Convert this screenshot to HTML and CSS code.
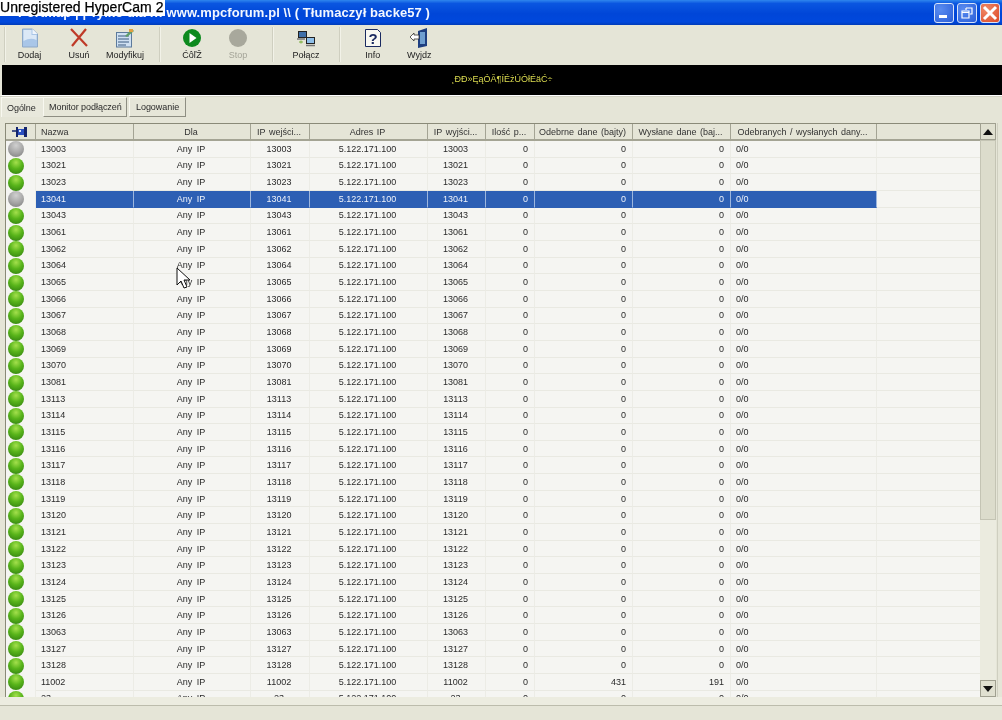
FILE: index.html
```html
<!DOCTYPE html>
<html lang="pl">
<head>
<meta charset="utf-8">
<title>Portmap</title>
<link rel="stylesheet" href="styles.css">
</head>
<body>
<div class="app">
  <div class="stamp">Unregistered HyperCam 2</div>
  <header class="titlebar">
    <span class="title">Portmap | | Tylko dla ::: www.mpcforum.pl \\ ( Tłumaczył backe57 )</span>
    <span class="winbtns">
      <span class="wb"><svg width="18" height="18" viewBox="0 0 18 18"><rect x="4" y="11" width="8" height="3" fill="#fff"/></svg></span>
      <span class="wb"><svg width="18" height="18" viewBox="0 0 18 18"><path d="M8 4h6v6h-2M8 4v2M4 7h7v7H4zM4 8.500h7" fill="none" stroke="#fff" stroke-width="1.200"/></svg></span>
      <span class="wb wb-close"><svg width="18" height="18" viewBox="0 0 18 18"><path d="M3 3l12 12M15 3L3 15" stroke="#fff" stroke-width="3"/></svg></span>
    </span>
  </header>
  <nav class="toolbar">
    <div class="tgroup g1">
      <div class="tool w1"><svg width="20" height="20" viewBox="0 0 20 20"><path d="M2.500 1h10l5 5v13h-15z" fill="#a9c6e8" stroke="#8ea9c8"/><path d="M12.500 1v5h5z" fill="#f0f5fc"/><path d="M3.500 2h8v5h5v5q-6-3-13 1z" fill="#dbe8f6"/></svg><span>Dodaj</span></div>
      <div class="tool w2"><svg width="20" height="20" viewBox="0 0 20 20"><path d="M2 1l16 17M17 1L3 18" stroke="#bf3a28" stroke-width="2.200" fill="none"/></svg><span>Usuń</span></div>
      <div class="tool w3"><svg width="20" height="20" viewBox="0 0 20 20"><rect x="1.500" y="4.500" width="15" height="14.500" fill="#cfe0f2" stroke="#5c7a9c"/><path d="M3 8h11M3 11h11M3 14h11M3 17h8" stroke="#3a5a80"/><path d="M10 8l7-7 2 2-7 6z" fill="#5f9e6a"/><rect x="14" y="1" width="4" height="3" fill="#e0a040"/></svg><span>Modyfikuj</span></div>
    </div>
    <div class="tgroup g2">
      <div class="tool w4"><svg width="20" height="20" viewBox="0 0 20 20"><circle cx="10" cy="10" r="9" fill="#0d8a1e"/><path d="M7.500 5l7 5-7 5z" fill="#fff"/></svg><span>ĆôľŽ</span></div>
      <div class="tool w5 off"><svg width="20" height="20" viewBox="0 0 20 20"><circle cx="10" cy="10" r="9" fill="#a8a89c"/></svg><span>Stop</span></div>
    </div>
    <div class="tgroup g3">
      <div class="tool w6"><svg width="20" height="20" viewBox="0 0 20 20"><rect x="2.500" y="3.500" width="8" height="6" fill="#3f6fa8" stroke="#222"/><rect x="10.500" y="9.500" width="8" height="6" fill="#8fbfe8" stroke="#222"/><path d="M1 11h8M10 17.500h9" stroke="#777" stroke-width="1.500"/><path d="M3 14h4M5 12.500v3" stroke="#7aae3a"/></svg><span>Połącz</span></div>
    </div>
    <div class="tgroup g4">
      <div class="tool w7"><svg width="20" height="20" viewBox="0 0 20 20"><path d="M2.500 1.500h12l3 3v14h-15z" fill="#f8f8f2" stroke="#1a2a60"/><text x="10" y="15.500" class="qmark">?</text></svg><span>Info</span></div>
      <div class="tool w8"><svg width="20" height="20" viewBox="0 0 20 20"><path d="M9 3l9-3v18l-9 2z" fill="#1f3f80"/><rect x="11" y="4" width="5" height="12" fill="#6f9fd0"/><path d="M1 9l4-4v2h5v4H5v2z" fill="#fff" stroke="#333" stroke-width="0.800"/></svg><span>Wyjdz</span></div>
    </div>
  </nav>
  <div class="banner">¸ÐÐ»ĘąÓÃ¶ÍÉżÚÓłÉäĆ÷</div>
  <div class="tabs">
    <span class="tab active">Ogólne</span>
    <span class="tab">Monitor podłączeń</span>
    <span class="tab">Logowanie</span>
  </div>
  <main class="panel">
    <div class="grid-area">
      <div class="row head">
        <div class="c pin"><svg width="15" height="10" viewBox="0 0 15 10"><path d="M0 4h5" stroke="#14246c" stroke-width="1.500"/><rect x="4" y="0" width="2" height="10" fill="#14246c"/><rect x="6" y="2" width="6" height="6" fill="#2a4fc0"/><rect x="7" y="3" width="2" height="2" fill="#dfe6f8"/><rect x="12" y="0" width="3" height="10" fill="#14246c"/></svg></div>
        <div class="c l name">Nazwa</div><div class="c m">Dla</div><div class="c m">IP wejści...</div><div class="c m">Adres IP</div><div class="c m">IP wyjści...</div><div class="c m">Ilość p...</div><div class="c m">Odebrne dane (bajty)</div><div class="c m">Wysłane dane (baj...</div><div class="c m">Odebranych / wysłanych dany...</div><div class="c"></div>
      </div>
      <div class="rows">
        <div class="row"><div class="c ic"><i class="led off"></i></div><div class="c n">13003</div><div class="c m">Any IP</div><div class="c m">13003</div><div class="c m">5.122.171.100</div><div class="c m">13003</div><div class="c r">0</div><div class="c r">0</div><div class="c r">0</div><div class="c n">0/0</div><div class="c"></div></div>
        <div class="row"><div class="c ic"><i class="led"></i></div><div class="c n">13021</div><div class="c m">Any IP</div><div class="c m">13021</div><div class="c m">5.122.171.100</div><div class="c m">13021</div><div class="c r">0</div><div class="c r">0</div><div class="c r">0</div><div class="c n">0/0</div><div class="c"></div></div>
        <div class="row"><div class="c ic"><i class="led"></i></div><div class="c n">13023</div><div class="c m">Any IP</div><div class="c m">13023</div><div class="c m">5.122.171.100</div><div class="c m">13023</div><div class="c r">0</div><div class="c r">0</div><div class="c r">0</div><div class="c n">0/0</div><div class="c"></div></div>
        <div class="row sel"><div class="c ic"><i class="led off"></i></div><div class="c n">13041</div><div class="c m">Any IP</div><div class="c m">13041</div><div class="c m">5.122.171.100</div><div class="c m">13041</div><div class="c r">0</div><div class="c r">0</div><div class="c r">0</div><div class="c n">0/0</div><div class="c"></div></div>
        <div class="row"><div class="c ic"><i class="led"></i></div><div class="c n">13043</div><div class="c m">Any IP</div><div class="c m">13043</div><div class="c m">5.122.171.100</div><div class="c m">13043</div><div class="c r">0</div><div class="c r">0</div><div class="c r">0</div><div class="c n">0/0</div><div class="c"></div></div>
        <div class="row"><div class="c ic"><i class="led"></i></div><div class="c n">13061</div><div class="c m">Any IP</div><div class="c m">13061</div><div class="c m">5.122.171.100</div><div class="c m">13061</div><div class="c r">0</div><div class="c r">0</div><div class="c r">0</div><div class="c n">0/0</div><div class="c"></div></div>
        <div class="row"><div class="c ic"><i class="led"></i></div><div class="c n">13062</div><div class="c m">Any IP</div><div class="c m">13062</div><div class="c m">5.122.171.100</div><div class="c m">13062</div><div class="c r">0</div><div class="c r">0</div><div class="c r">0</div><div class="c n">0/0</div><div class="c"></div></div>
        <div class="row"><div class="c ic"><i class="led"></i></div><div class="c n">13064</div><div class="c m">Any IP</div><div class="c m">13064</div><div class="c m">5.122.171.100</div><div class="c m">13064</div><div class="c r">0</div><div class="c r">0</div><div class="c r">0</div><div class="c n">0/0</div><div class="c"></div></div>
        <div class="row"><div class="c ic"><i class="led"></i></div><div class="c n">13065</div><div class="c m">Any IP</div><div class="c m">13065</div><div class="c m">5.122.171.100</div><div class="c m">13065</div><div class="c r">0</div><div class="c r">0</div><div class="c r">0</div><div class="c n">0/0</div><div class="c"></div></div>
        <div class="row"><div class="c ic"><i class="led"></i></div><div class="c n">13066</div><div class="c m">Any IP</div><div class="c m">13066</div><div class="c m">5.122.171.100</div><div class="c m">13066</div><div class="c r">0</div><div class="c r">0</div><div class="c r">0</div><div class="c n">0/0</div><div class="c"></div></div>
        <div class="row"><div class="c ic"><i class="led"></i></div><div class="c n">13067</div><div class="c m">Any IP</div><div class="c m">13067</div><div class="c m">5.122.171.100</div><div class="c m">13067</div><div class="c r">0</div><div class="c r">0</div><div class="c r">0</div><div class="c n">0/0</div><div class="c"></div></div>
        <div class="row"><div class="c ic"><i class="led"></i></div><div class="c n">13068</div><div class="c m">Any IP</div><div class="c m">13068</div><div class="c m">5.122.171.100</div><div class="c m">13068</div><div class="c r">0</div><div class="c r">0</div><div class="c r">0</div><div class="c n">0/0</div><div class="c"></div></div>
        <div class="row"><div class="c ic"><i class="led"></i></div><div class="c n">13069</div><div class="c m">Any IP</div><div class="c m">13069</div><div class="c m">5.122.171.100</div><div class="c m">13069</div><div class="c r">0</div><div class="c r">0</div><div class="c r">0</div><div class="c n">0/0</div><div class="c"></div></div>
        <div class="row"><div class="c ic"><i class="led"></i></div><div class="c n">13070</div><div class="c m">Any IP</div><div class="c m">13070</div><div class="c m">5.122.171.100</div><div class="c m">13070</div><div class="c r">0</div><div class="c r">0</div><div class="c r">0</div><div class="c n">0/0</div><div class="c"></div></div>
        <div class="row"><div class="c ic"><i class="led"></i></div><div class="c n">13081</div><div class="c m">Any IP</div><div class="c m">13081</div><div class="c m">5.122.171.100</div><div class="c m">13081</div><div class="c r">0</div><div class="c r">0</div><div class="c r">0</div><div class="c n">0/0</div><div class="c"></div></div>
        <div class="row"><div class="c ic"><i class="led"></i></div><div class="c n">13113</div><div class="c m">Any IP</div><div class="c m">13113</div><div class="c m">5.122.171.100</div><div class="c m">13113</div><div class="c r">0</div><div class="c r">0</div><div class="c r">0</div><div class="c n">0/0</div><div class="c"></div></div>
        <div class="row"><div class="c ic"><i class="led"></i></div><div class="c n">13114</div><div class="c m">Any IP</div><div class="c m">13114</div><div class="c m">5.122.171.100</div><div class="c m">13114</div><div class="c r">0</div><div class="c r">0</div><div class="c r">0</div><div class="c n">0/0</div><div class="c"></div></div>
        <div class="row"><div class="c ic"><i class="led"></i></div><div class="c n">13115</div><div class="c m">Any IP</div><div class="c m">13115</div><div class="c m">5.122.171.100</div><div class="c m">13115</div><div class="c r">0</div><div class="c r">0</div><div class="c r">0</div><div class="c n">0/0</div><div class="c"></div></div>
        <div class="row"><div class="c ic"><i class="led"></i></div><div class="c n">13116</div><div class="c m">Any IP</div><div class="c m">13116</div><div class="c m">5.122.171.100</div><div class="c m">13116</div><div class="c r">0</div><div class="c r">0</div><div class="c r">0</div><div class="c n">0/0</div><div class="c"></div></div>
        <div class="row"><div class="c ic"><i class="led"></i></div><div class="c n">13117</div><div class="c m">Any IP</div><div class="c m">13117</div><div class="c m">5.122.171.100</div><div class="c m">13117</div><div class="c r">0</div><div class="c r">0</div><div class="c r">0</div><div class="c n">0/0</div><div class="c"></div></div>
        <div class="row"><div class="c ic"><i class="led"></i></div><div class="c n">13118</div><div class="c m">Any IP</div><div class="c m">13118</div><div class="c m">5.122.171.100</div><div class="c m">13118</div><div class="c r">0</div><div class="c r">0</div><div class="c r">0</div><div class="c n">0/0</div><div class="c"></div></div>
        <div class="row"><div class="c ic"><i class="led"></i></div><div class="c n">13119</div><div class="c m">Any IP</div><div class="c m">13119</div><div class="c m">5.122.171.100</div><div class="c m">13119</div><div class="c r">0</div><div class="c r">0</div><div class="c r">0</div><div class="c n">0/0</div><div class="c"></div></div>
        <div class="row"><div class="c ic"><i class="led"></i></div><div class="c n">13120</div><div class="c m">Any IP</div><div class="c m">13120</div><div class="c m">5.122.171.100</div><div class="c m">13120</div><div class="c r">0</div><div class="c r">0</div><div class="c r">0</div><div class="c n">0/0</div><div class="c"></div></div>
        <div class="row"><div class="c ic"><i class="led"></i></div><div class="c n">13121</div><div class="c m">Any IP</div><div class="c m">13121</div><div class="c m">5.122.171.100</div><div class="c m">13121</div><div class="c r">0</div><div class="c r">0</div><div class="c r">0</div><div class="c n">0/0</div><div class="c"></div></div>
        <div class="row"><div class="c ic"><i class="led"></i></div><div class="c n">13122</div><div class="c m">Any IP</div><div class="c m">13122</div><div class="c m">5.122.171.100</div><div class="c m">13122</div><div class="c r">0</div><div class="c r">0</div><div class="c r">0</div><div class="c n">0/0</div><div class="c"></div></div>
        <div class="row"><div class="c ic"><i class="led"></i></div><div class="c n">13123</div><div class="c m">Any IP</div><div class="c m">13123</div><div class="c m">5.122.171.100</div><div class="c m">13123</div><div class="c r">0</div><div class="c r">0</div><div class="c r">0</div><div class="c n">0/0</div><div class="c"></div></div>
        <div class="row"><div class="c ic"><i class="led"></i></div><div class="c n">13124</div><div class="c m">Any IP</div><div class="c m">13124</div><div class="c m">5.122.171.100</div><div class="c m">13124</div><div class="c r">0</div><div class="c r">0</div><div class="c r">0</div><div class="c n">0/0</div><div class="c"></div></div>
        <div class="row"><div class="c ic"><i class="led"></i></div><div class="c n">13125</div><div class="c m">Any IP</div><div class="c m">13125</div><div class="c m">5.122.171.100</div><div class="c m">13125</div><div class="c r">0</div><div class="c r">0</div><div class="c r">0</div><div class="c n">0/0</div><div class="c"></div></div>
        <div class="row"><div class="c ic"><i class="led"></i></div><div class="c n">13126</div><div class="c m">Any IP</div><div class="c m">13126</div><div class="c m">5.122.171.100</div><div class="c m">13126</div><div class="c r">0</div><div class="c r">0</div><div class="c r">0</div><div class="c n">0/0</div><div class="c"></div></div>
        <div class="row"><div class="c ic"><i class="led"></i></div><div class="c n">13063</div><div class="c m">Any IP</div><div class="c m">13063</div><div class="c m">5.122.171.100</div><div class="c m">13063</div><div class="c r">0</div><div class="c r">0</div><div class="c r">0</div><div class="c n">0/0</div><div class="c"></div></div>
        <div class="row"><div class="c ic"><i class="led"></i></div><div class="c n">13127</div><div class="c m">Any IP</div><div class="c m">13127</div><div class="c m">5.122.171.100</div><div class="c m">13127</div><div class="c r">0</div><div class="c r">0</div><div class="c r">0</div><div class="c n">0/0</div><div class="c"></div></div>
        <div class="row"><div class="c ic"><i class="led"></i></div><div class="c n">13128</div><div class="c m">Any IP</div><div class="c m">13128</div><div class="c m">5.122.171.100</div><div class="c m">13128</div><div class="c r">0</div><div class="c r">0</div><div class="c r">0</div><div class="c n">0/0</div><div class="c"></div></div>
        <div class="row"><div class="c ic"><i class="led"></i></div><div class="c n">11002</div><div class="c m">Any IP</div><div class="c m">11002</div><div class="c m">5.122.171.100</div><div class="c m">11002</div><div class="c r">0</div><div class="c r">431</div><div class="c r">191</div><div class="c n">0/0</div><div class="c"></div></div>
        <div class="row"><div class="c ic"><i class="led"></i></div><div class="c n">23</div><div class="c m">Any IP</div><div class="c m">23</div><div class="c m">5.122.171.100</div><div class="c m">23</div><div class="c r">0</div><div class="c r">0</div><div class="c r">0</div><div class="c n">0/0</div><div class="c"></div></div>
      </div>
      <svg class="cursor" width="16" height="22" viewBox="0 0 16 22"><path d="M1 1v17l4-4 3 7 3-1-3-7h6z" fill="#fff" stroke="#111"/></svg>
    </div>
    <div class="scrollbar">
      <div class="sb-btn"><svg width="10" height="6" viewBox="0 0 10 6"><path d="M5 0l5 6H0z" fill="#111"/></svg></div>
      <div class="sb-thumb"></div>
      <div class="sb-track"></div>
      <div class="sb-btn"><svg width="10" height="6" viewBox="0 0 10 6"><path d="M5 6L0 0h10z" fill="#111"/></svg></div>
    </div>
    <div class="edge"></div>
  </main>
  <footer class="status"></footer>
</div>
</body>
</html>
```
FILE: styles.css
```css
* { box-sizing: border-box; }
html, body { margin: 0; padding: 0; height: 100%; overflow: hidden; background: #e6e6d8; }
body { font-family: "Liberation Sans", Arial, sans-serif; font-size: 9px; color: #2a2a2a; }

.app { position: relative; width: 1002px; height: 720px; display: flex; flex-direction: column; overflow: hidden; filter: blur(0.35px); }

.stamp { position: absolute; left: 0; top: 0; width: 165px; height: 16px; background: #fff; color: #000; font: 14px/15px "Liberation Sans", sans-serif; letter-spacing: 0.04px; -webkit-text-stroke: 0.25px #000; white-space: nowrap; overflow: hidden; z-index: 3; }

.titlebar { height: 25px; flex: none; display: flex; align-items: center; justify-content: space-between; padding: 0 0 0 18px; background: linear-gradient(#2f86ee 0, #0a56e0 14%, #0046d8 55%, #0048dc 88%, #003bb8 100%); }
.title { color: #f4f8ff; font: bold 13px/22px "Liberation Sans", sans-serif; letter-spacing: 0.08px; white-space: nowrap; }
.winbtns { display: flex; gap: 3px; padding-right: 2px; }
.wb { width: 20px; height: 20px; border: 1px solid #d8e4fa; border-radius: 3px; background: radial-gradient(circle at 30% 30%, #5a8cf0, #2a5ed8); display: flex; align-items: center; justify-content: center; overflow: hidden; }
.wb-close { background: radial-gradient(circle at 30% 30%, #f08a68, #dc4a28); }

.toolbar { height: 40px; flex: none; display: flex; background: #e5e5d7; padding-left: 4px; }
.tgroup { display: flex; border-left: 1px solid #cfcfc0; box-shadow: inset 1px 0 0 #f2f2e8; margin-top: 2px; margin-bottom: 3px; }
.g1 { width: 155px; }
.g2 { width: 113px; }
.g3 { width: 67px; }
.g4 { width: 102px; }
.tool { display: flex; flex-direction: column; align-items: center; justify-content: flex-start; font-size: 9px; line-height: 11px; color: #222; padding-top: 1px; gap: 2px; }
.tool svg { display: block; }
.tool.off { color: #a4a498; }
.w1 { width: 49px; }
.w2 { width: 50px; }
.w3 { width: 42px; }
.w4 { width: 64px; }
.w5 { width: 28px; }
.w6 { width: 66px; }
.w7 { width: 50px; margin-left: 8px; }
.w8 { width: 44px; }
.qmark { font: bold 15px "Liberation Sans", sans-serif; fill: #1a2a60; text-anchor: middle; }

.banner { height: 31px; flex: none; background: #000; color: #dcdc50; border-left: 2px solid #e5e5d7; border-bottom: 1px solid #fff; display: flex; align-items: center; justify-content: center; font-size: 9px; padding-bottom: 2px; }

.tabs { height: 25px; flex: none; display: flex; align-items: flex-start; background: #e5e5d7; padding-left: 1px; border-top: 1px solid #d2d2c4; }
.tab { height: 20px; padding: 0 5px; display: flex; align-items: center; border: 1px solid; border-color: #f8f8f0 #8e8e82 #8e8e82 #f8f8f0; background: #e6e6d8; white-space: nowrap; color: #2a2a2a; letter-spacing: -0.05px; }
.tab:nth-child(2) { width: 84px; }
.tab:nth-child(3) { width: 57px; margin-left: 2px; padding-left: 6px; }
.tab.active { width: 42px; padding-left: 5px; border-right: 0; border-bottom: 0; background: #e8e8dc; }

.panel { flex: 1; min-height: 0; display: flex; padding: 2px 0 0 5px; background: #e5e5d7; border-bottom: 8px solid #ecece0; }
.grid-area { position: relative; width: 975px; flex: none; display: flex; flex-direction: column; overflow: hidden; background: #f5f5f2; border-left: 1px solid #8a8a78; border-top: 1px solid #8a8a78; }
.row { display: grid; grid-template-columns: 30px 98px 117px 59px 118px 58px 49px 98px 98px 146px 103px; height: 16.66px; }
.head { height: 17px; flex: none; background: #e5e5d7; border-bottom: 2px solid #a4a494; }
.head .c { border-right: 1px solid #a4a494; border-bottom: 0; color: #333; }
.head .c.m { word-spacing: 1px; }
.head .c:last-child { border-right: 0; }
.rows { flex: 1; min-height: 0; overflow: hidden; }
.c { display: flex; align-items: center; min-width: 0; white-space: nowrap; overflow: hidden; border-right: 1px solid #ecece6; border-bottom: 1px solid #e9e9e2; padding: 0 5px; }
.c.m { justify-content: center; word-spacing: 2px; padding: 0 6px 0 4px; }
.c.r { justify-content: flex-end; padding-right: 6px; }
.c.pin { justify-content: center; padding: 0 3px 0 0; }
.c.ic { padding: 0; justify-content: center; background: #f5f5f2; border-bottom: 0; overflow: visible; }
.c:last-child { border-right: 0; }
.led { display: block; width: 16px; height: 16px; margin-left: -10px; flex: none; border-radius: 50%; background: radial-gradient(circle at 50% 28%, #a4e04c 0, #58b41a 45%, #2d7a10 100%); }
.led.off { background: radial-gradient(circle at 50% 28%, #d0d0d0 0, #a4a4a4 55%, #787878 100%); }
.sel .c:not(.ic):not(:last-child) { background: #2d5fb4; color: #eef2fa; border-right-color: #9db6de; border-bottom-color: #2d5fb4; }

.cursor { position: absolute; left: 170px; top: 143px; }

.scrollbar { width: 16px; flex: none; display: flex; flex-direction: column; background: #ebebdf; }
.sb-btn { height: 17px; flex: none; background: #e0e0d0; border: 1px solid #a0a090; display: flex; align-items: center; justify-content: center; }
.sb-thumb { height: 380px; flex: none; background: #dcdccc; border: 1px solid #c4c4b4; }
.sb-track { flex: 1; }
.edge { flex: 1; margin-left: 1px; border-left: 1px solid #cfcfc0; background: #e5e5d7; }

.status { height: 15px; flex: none; background: #e5e5d7; border-top: 1px solid #bcbcac; }
```
